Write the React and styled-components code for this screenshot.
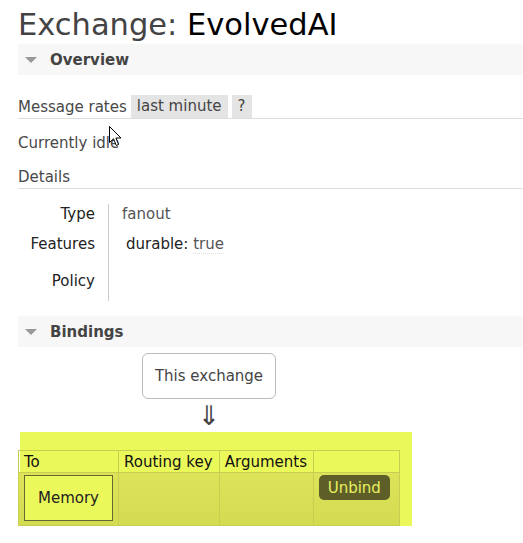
import React from "react";
import styled, { createGlobalStyle } from "styled-components";

const Global = createGlobalStyle`
  html, body { margin: 0; padding: 0; background: #fff; }
  body { font-family: "DejaVu Sans", Verdana, sans-serif; color: #484848; font-size: 15px; overflow: hidden; }
`;

const Page = styled.div`
  position: relative;
  padding-left: 18px;
  width: 523px;
  box-sizing: border-box;
`;

const Title = styled.h1`
  margin: 0;
  padding-top: 7px;
  height: 44px;
  box-sizing: border-box;
  font-size: 30.5px;
  line-height: 36px;
  font-weight: normal;
  color: #444;
  white-space: nowrap;
  b { font-weight: normal; color: #000; }
`;

const SectionBar = styled.div`
  display: flex;
  align-items: center;
  gap: 13px;
  height: 31px;
  background: #f7f7f7;
  padding-left: 7px;
  font-weight: bold;
  color: #444;
  font-size: 15px;
  margin-top: ${(p) => p.$mt || 0}px;
`;

const Tri = styled.span`
  width: 0;
  height: 0;
  border-left: 6px solid transparent;
  border-right: 6px solid transparent;
  border-top: 6px solid #999;
  margin-top: 1px;
`;

const RateRow = styled.div`
  display: flex;
  align-items: center;
  gap: 4px;
  margin-top: 20px;
  height: 23px;
  border-bottom: 1px solid #ddd;
`;

const RateLabel = styled.span`
  margin-right: 0;
`;

const Pill = styled.span`
  background: #e4e4e4;
  height: 23px;
  line-height: 23px;
  padding: 0 6px;
  color: #444;
`;

const Line = styled.div`
  height: ${(p) => p.$h}px;
  line-height: ${(p) => p.$h}px;
  border-bottom: ${(p) => (p.$rule ? "1px solid #ddd" : "none")};
`;

const Details = styled.div`
  display: grid;
  grid-template-columns: 90px 1px auto;
  margin-top: 15px;
`;

const Labels = styled.div`
  display: flex;
  flex-direction: column;
  text-align: right;
  color: #222;
  padding-right: 13px;
  box-sizing: border-box;
  width: 90px;
`;

const Divider = styled.div`
  width: 1px;
  background: #ccc;
  height: 97px;
`;

const Values = styled.div`
  display: flex;
  flex-direction: column;
  padding-left: 13px;
`;

const Cell = styled.div`
  height: ${(p) => p.$h}px;
  line-height: ${(p) => p.$h}px;
  padding-left: ${(p) => p.$pl || 0}px;
  white-space: nowrap;
`;

const Muted = styled.span`
  color: #555;
`;

const Dark = styled.span`
  color: #222;
`;

const True = styled.span`
  color: #555;
  border-bottom: 1px dotted #ddd;
`;

const Flow = styled.div`
  width: 382px;
  display: flex;
  flex-direction: column;
  align-items: center;
  padding-top: 6px;
`;

const ExchangeBox = styled.div`
  width: 134px;
  height: 46px;
  box-sizing: border-box;
  border: 1px solid #bbb;
  border-radius: 6px;
  display: flex;
  align-items: center;
  justify-content: center;
  color: #444;
`;

const Arrow = styled.div`
  font-size: 27px;
  line-height: 34px;
  height: 33px;
  color: #444;
  overflow: visible;
`;

const Highlight = styled.div`
  margin-left: 2px;
  width: 392px;
  height: 94px;
  background: #ebf85a;
  padding-top: 18px;
  box-sizing: border-box;
`;

const Table = styled.table`
  margin-left: -2px;
  border-collapse: collapse;
  width: 382px;
  border: 1px solid #d2d49a;
  color: #111;
  font-size: 15px;
`;

const Th = styled.th`
  font-weight: normal;
  text-align: left;
  height: 22px;
  padding: 0 5px;
  border: 1px solid #c9cd52;
  white-space: nowrap;
  width: ${(p) => p.$w}px;
  box-sizing: border-box;
`;

const BodyRow = styled.tr`
  background: linear-gradient(#dde45a, #d3db50);
`;

const Td = styled.td`
  border: 1px solid #c9cd52;
  height: 53px;
  padding: 2px 5px;
  vertical-align: top;
  box-sizing: border-box;
`;

const MemoryBox = styled.div`
  width: 89px;
  height: 46px;
  box-sizing: border-box;
  border: 1px solid #666633;
  background: #ebf85a;
  display: flex;
  align-items: center;
  justify-content: center;
  color: #222;
`;

const Unbind = styled.button`
  background: #5e5e28;
  color: #e8f060;
  border: none;
  border-radius: 5px;
  height: 25px;
  padding: 0 9px;
  font-family: inherit;
  font-size: 15px;
`;

const Cursor = styled.svg`
  position: absolute;
  left: 109px;
  top: 126px;
`;

export default function App() {
  return (
    <>
      <Global />
      <Page>
        <Title>
          Exchange: <b>EvolvedAI</b>
        </Title>
        <SectionBar>
          <Tri />
          Overview
        </SectionBar>
        <RateRow>
          <RateLabel>Message rates</RateLabel>
          <Pill>last minute</Pill>
          <Pill>?</Pill>
        </RateRow>
        <Line $h={48}>Currently idle</Line>
        <Line $h={21} $rule>
          Details
        </Line>
        <Details>
          <Labels>
            <Cell $h={20}>Type</Cell>
            <Cell $h={40}>Features</Cell>
            <Cell $h={34}>Policy</Cell>
          </Labels>
          <Divider />
          <Values>
            <Cell $h={20}>
              <Muted>fanout</Muted>
            </Cell>
            <Cell $h={40} $pl={4}>
              <Dark>durable:</Dark> <True>true</True>
            </Cell>
          </Values>
        </Details>
        <SectionBar $mt={15}>
          <Tri />
          Bindings
        </SectionBar>
        <Flow>
          <ExchangeBox>This exchange</ExchangeBox>
          <Arrow>⇓</Arrow>
        </Flow>
        <Highlight>
          <Table>
            <thead>
              <tr>
                <Th $w={100}>To</Th>
                <Th $w={101}>Routing key</Th>
                <Th $w={94}>Arguments</Th>
                <Th $w={87}></Th>
              </tr>
            </thead>
            <tbody>
              <BodyRow>
                <Td>
                  <MemoryBox>Memory</MemoryBox>
                </Td>
                <Td></Td>
                <Td></Td>
                <Td>
                  <Unbind>Unbind</Unbind>
                </Td>
              </BodyRow>
            </tbody>
          </Table>
        </Highlight>
        <Cursor width="13" height="21" viewBox="0 0 13 21">
          <path d="M0.5 0.5 L0.5 16.5 L4.5 12.8 L7.3 19.5 L9.6 18.5 L6.9 12 L12 12 Z" fill="#fff" stroke="#000" strokeWidth="1" />
        </Cursor>
      </Page>
    </>
  );
}
